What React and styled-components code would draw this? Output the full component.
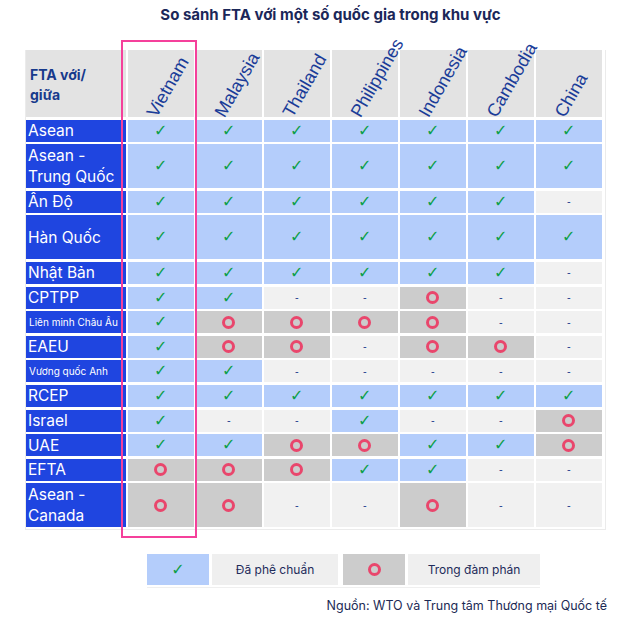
import styled, { createGlobalStyle } from 'styled-components';

const GlobalStyle = createGlobalStyle`
  html, body {
    margin: 0;
    padding: 0;
    background: #ffffff;
  }
  body {
    font-family: 'Inter', 'Liberation Sans', sans-serif;
  }
`;

const COUNTRIES = ['Vietnam', 'Malaysia', 'Thailand', 'Philippines', 'Indonesia', 'Cambodia', 'China'];

// c = đã phê chuẩn, o = trong đàm phán, - = không có
const ROWS = [
  { label: 'Asean', marks: 'ccccccc' },
  { label: ['Asean -', 'Trung Quốc'], marks: 'ccccccc', tall: true },
  { label: 'Ấn Độ', marks: 'cccccc-' },
  { label: 'Hàn Quốc', marks: 'ccccccc', tall: true },
  { label: 'Nhật Bản', marks: 'cccccc-' },
  { label: 'CPTPP', marks: 'cc--o--' },
  { label: 'Liên minh Châu Âu', marks: 'coooo--', small: true },
  { label: 'EAEU', marks: 'coo-oo-' },
  { label: 'Vương quốc Anh', marks: 'cc-----', small: true },
  { label: 'RCEP', marks: 'ccccccc' },
  { label: 'Israel', marks: 'c--c--o' },
  { label: 'UAE', marks: 'ccoocco' },
  { label: 'EFTA', marks: 'ooocc--' },
  { label: ['Asean -', 'Canada'], marks: 'oo--o--', tall: true },
];

const ROW_TEMPLATE = ['67px', ...ROWS.map((r) => (r.tall ? '44px' : '22px'))].join(' ');

const cellColors = {
  c: '#b4cdfb',
  o: '#cccccc',
  '-': '#f1f1f1',
};

const Page = styled.div`
  width: 631px;
  height: 620px;
  padding-top: 5px;
  box-sizing: border-box;
`;

const Title = styled.h1`
  margin: 0 0 25px 0;
  font-family: 'Inter', 'Liberation Sans', sans-serif;
  font-size: 15px;
  font-weight: 700;
  color: #1b2759;
  text-align: center;
  line-height: 20px;
  padding-left: 30px;
`;

const TableFrame = styled.div`
  position: relative;
  margin-left: 25px;
  width: 576px;
  padding: 0 3px 2px 0;
  border: 1px solid #ebebeb;
  border-top: none;
`;

const Grid = styled.div`
  display: grid;
  grid-template-columns: 99.5px repeat(7, 65.5px);
  grid-template-rows: ${ROW_TEMPLATE};
  column-gap: 2.5px;
  row-gap: 2.6px;
`;

const HeaderLabel = styled.div`
  background: #e3e3e3;
  display: flex;
  flex-direction: column;
  justify-content: center;
  padding-left: 4px;
  padding-top: 2px;
  font-size: 14px;
  font-weight: 700;
  line-height: 20px;
  color: #173a8c;
`;

const HeaderCell = styled.div`
  background: #e3e3e3;
  display: flex;
  align-items: flex-end;
  padding-left: 30px;
`;

const CountryName = styled.span`
  display: block;
  white-space: nowrap;
  font-family: 'Liberation Sans', Arial, sans-serif;
  font-size: 18px;
  line-height: 18px;
  color: #1a3c98;
  transform-origin: 0 100%;
  transform: translate(1px, 3px) rotate(-60deg);
`;

const RowLabel = styled.div`
  background: #1f45e0;
  color: #ffffff;
  display: flex;
  flex-direction: column;
  justify-content: center;
  padding-left: ${({ $small }) => ($small ? '3px' : '2px')};
  font-size: ${({ $small }) => ($small ? '10px' : '15.5px')};
  line-height: ${({ $small }) => ($small ? '14px' : '21px')};
  white-space: nowrap;
  overflow: hidden;
`;

const MarkCell = styled.div`
  background: ${({ $kind }) => cellColors[$kind]};
  display: flex;
  align-items: center;
  justify-content: center;
  overflow: hidden;
`;

const Check = styled.span`
  font-family: 'DejaVu Sans', sans-serif;
  font-size: 16px;
  line-height: 16px;
  color: #0d9f47;
  font-weight: 700;
`;

const Ring = styled.span`
  display: block;
  width: 7px;
  height: 7px;
  border: 3px solid #e9466c;
  border-radius: 50%;
`;

const Dash = styled.span`
  font-family: 'Liberation Sans', sans-serif;
  font-size: 11px;
  line-height: 11px;
  color: #1a3a8c;
`;

const Highlight = styled.div`
  position: absolute;
  left: 95px;
  top: -10px;
  width: 72px;
  height: 494px;
  border: 2.5px solid #f5409b;
  pointer-events: none;
`;

const Legend = styled.div`
  display: flex;
  gap: 3px;
  margin: 24px 0 0 147px;
  width: 393px;
  padding-bottom: 2px;
  border-bottom: 1px solid #efefef;
`;

const LegendSwatch = styled.div`
  width: 62px;
  height: 31px;
  background: ${({ $kind }) => cellColors[$kind]};
  display: flex;
  align-items: center;
  justify-content: center;
`;

const LegendText = styled.div`
  width: ${({ $w }) => $w}px;
  height: 31px;
  background: #efefef;
  display: flex;
  align-items: center;
  justify-content: center;
  font-size: 12px;
  color: #1e2b5a;
  margin-right: ${({ $extra }) => ($extra ? '2px' : '0')};
`;

const Source = styled.div`
  margin-top: 9px;
  width: 607px;
  text-align: right;
  font-size: 12.5px;
  line-height: 18px;
  color: #1c2a55;
`;

const Mark = ({ kind }) => {
  if (kind === 'c') return <Check>✓</Check>;
  if (kind === 'o') return <Ring />;
  return <Dash>-</Dash>;
};

function RowFragment({ row }) {
  const lines = Array.isArray(row.label) ? row.label : [row.label];
  return (
    <>
      <RowLabel $small={row.small}>
        {lines.map((l) => (
          <span key={l}>{l}</span>
        ))}
      </RowLabel>
      {row.marks.split('').map((m, j) => (
        <MarkCell key={j} $kind={m}>
          <Mark kind={m} />
        </MarkCell>
      ))}
    </>
  );
}

export default function App() {
  return (
    <>
      <GlobalStyle />
      <Page>
        <Title>So sánh FTA với một số quốc gia trong khu vực</Title>
        <TableFrame>
          <Grid>
            <HeaderLabel>
              <span>FTA với/</span>
              <span>giữa</span>
            </HeaderLabel>
            {COUNTRIES.map((c) => (
              <HeaderCell key={c}>
                <CountryName>{c}</CountryName>
              </HeaderCell>
            ))}
            {ROWS.map((row, i) => (
              <RowFragment key={i} row={row} />
            ))}
          </Grid>
          <Highlight />
        </TableFrame>
        <Legend>
          <LegendSwatch $kind="c">
            <Mark kind="c" />
          </LegendSwatch>
          <LegendText $w={126} $extra>Đã phê chuẩn</LegendText>
          <LegendSwatch $kind="o">
            <Mark kind="o" />
          </LegendSwatch>
          <LegendText $w={132}>Trong đàm phán</LegendText>
        </Legend>
        <Source>Nguồn: WTO và Trung tâm Thương mại Quốc tế</Source>
      </Page>
    </>
  );
}
